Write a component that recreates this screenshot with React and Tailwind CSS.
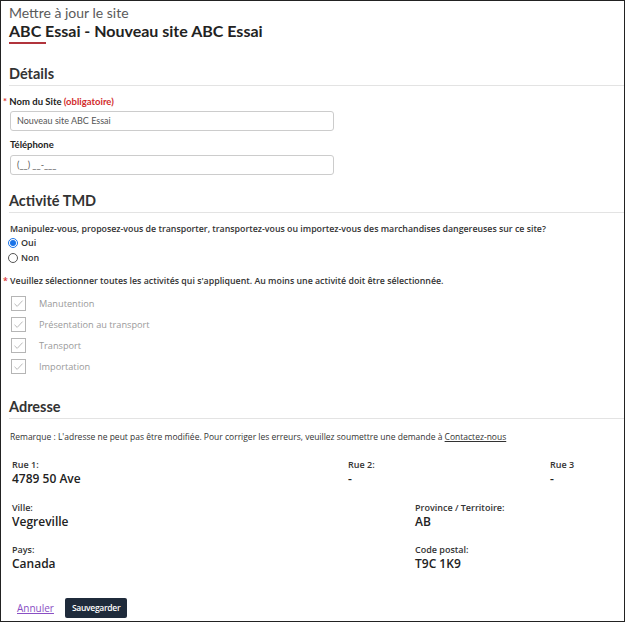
import React from "react";

const lato = { fontFamily: "Lato, 'Open Sans', sans-serif" };

function Check() {
  return (
    <span className="flex h-[15px] w-[15px] shrink-0 items-center justify-center border border-[#b5b5b5] bg-white">
      <svg width="11" height="11" viewBox="0 0 11 11">
        <path d="M1.5 5.8 L4.2 8.4 L9.6 2.6" fill="none" stroke="#b9b9b9" strokeWidth="1" />
      </svg>
    </span>
  );
}

function Radio({ checked }) {
  return (
    <span className={"flex h-[10px] w-[10px] items-center justify-center rounded-full border " + (checked ? "border-[#1a73e8]" : "border-[#555]")}>
      {checked && <span className="h-[6px] w-[6px] rounded-full bg-[#1a73e8]" />}
    </span>
  );
}

function Field({ label, value }) {
  return (
    <div className="flex flex-col">
      <div className="text-[9px] font-semibold leading-[12px] text-[#333]">{label}</div>
      <div className="text-[12px] font-semibold leading-[16px] text-[#222]">{value}</div>
    </div>
  );
}

export default function App() {
  return (
    <div
      className="relative h-[622px] w-[625px] overflow-hidden border border-[#222] bg-white text-[#333]"
      style={{ fontFamily: "'Open Sans', sans-serif" }}
    >
      <div className="pl-[8px] pt-[3px]">
        <div className="text-[14px] leading-[17px] text-[#5a5a5a]" style={lato}>Mettre à jour le site</div>
        <div className="text-[16px] font-bold leading-[19px] text-[#222]" style={lato}>ABC Essai - Nouveau site ABC Essai</div>
        <div className="mt-[2px] h-[2px] w-[37px] bg-[#b1343c]" />
      </div>

      <div className="ml-[8px] mt-[21px] border-b border-[#e3e3e3] pb-[2px] text-[14.5px] font-bold leading-[18px] text-[#333]" style={lato}>Détails</div>

      <div className="mt-[10px] pl-[2px] text-[9.5px] font-bold leading-[12px] text-[#222]" style={lato}>
        <span className="text-[#d33]">*</span> Nom du Site <span className="text-[#d22b2b]">(obligatoire)</span>
      </div>
      <div className="ml-[9px] mt-[3px] flex h-[20px] w-[324px] items-center rounded-[3px] border border-[#ccc] px-[6px] text-[9px] text-[#555]" style={lato}>
        Nouveau site ABC Essai
      </div>

      <div className="ml-[9px] mt-[8px] text-[9.5px] font-bold leading-[12px] text-[#222]" style={lato}>Téléphone</div>
      <div className="ml-[9px] mt-[4px] flex h-[20px] w-[324px] items-center rounded-[3px] border border-[#ccc] px-[6px] text-[9px] text-[#555]" style={lato}>
        (__) __-___
      </div>

      <div className="ml-[8px] mt-[17px] border-b border-[#e3e3e3] pb-[2px] text-[14.5px] font-bold leading-[18px] text-[#333]" style={lato}>Activité TMD</div>

      <div className="ml-[9px] mt-[10px] text-[8.8px] font-semibold leading-[12px] text-[#333]">
        Manipulez-vous, proposez-vous de transporter, transportez-vous ou importez-vous des marchandises dangereuses sur ce site?
      </div>
      <div className="ml-[7px] mt-[2px] flex h-[12px] items-center gap-[3px] text-[9px] font-semibold leading-[12px]">
        <Radio checked /> Oui
      </div>
      <div className="ml-[7px] mt-[3px] flex h-[12px] items-center gap-[3px] text-[9px] font-semibold leading-[12px]">
        <Radio /> Non
      </div>

      <div className="ml-[2px] mt-[11px] text-[8.8px] font-semibold leading-[12px] text-[#333]">
        <span className="text-[#d33]">*</span> Veuillez sélectionner toutes les activités qui s'appliquent. Au moins une activité doit être sélectionnée.
      </div>

      <div className="ml-[10px] mt-[9px] flex flex-col gap-[6px] text-[9.2px] text-[#9a9a9a]">
        {["Manutention", "Présentation au transport", "Transport", "Importation"].map((t) => (
          <div key={t} className="flex h-[15px] items-center gap-[13px] leading-[15px]">
            <Check />
            <span>{t}</span>
          </div>
        ))}
      </div>

      <div className="ml-[8px] mt-[24px] border-b border-[#e3e3e3] pb-[2px] text-[14.5px] font-bold leading-[18px] text-[#333]" style={lato}>Adresse</div>

      <div className="ml-[9px] mt-[12px] text-[8.5px] leading-[12px] text-[#333]">
        Remarque : L'adresse ne peut pas être modifiée. Pour corriger les erreurs, veuillez soumettre une demande à <span className="underline">Contactez-nous</span>
      </div>

      <div className="ml-[11px] mt-[16px] grid grid-cols-[336px_202px_1fr]">
        <Field label="Rue 1:" value="4789 50 Ave" />
        <Field label="Rue 2:" value="-" />
        <Field label="Rue 3" value="-" />
      </div>
      <div className="ml-[11px] mt-[15px] grid grid-cols-[403px_1fr]">
        <Field label="Ville:" value="Vegreville" />
        <Field label="Province / Territoire:" value="AB" />
      </div>
      <div className="ml-[11px] mt-[14px] grid grid-cols-[403px_1fr]">
        <Field label="Pays:" value="Canada" />
        <Field label="Code postal:" value="T9C 1K9" />
      </div>

      <div className="ml-[16px] mt-[26px] flex items-center gap-[11px]">
        <span className="text-[10px] text-[#8a4fc4] underline">Annuler</span>
        <span className="flex h-[20px] items-center rounded-[2px] bg-[#1f2b3b] px-[7px] text-[8.5px] font-semibold tracking-[-0.3px] text-white">Sauvegarder</span>
      </div>
    </div>
  );
}
